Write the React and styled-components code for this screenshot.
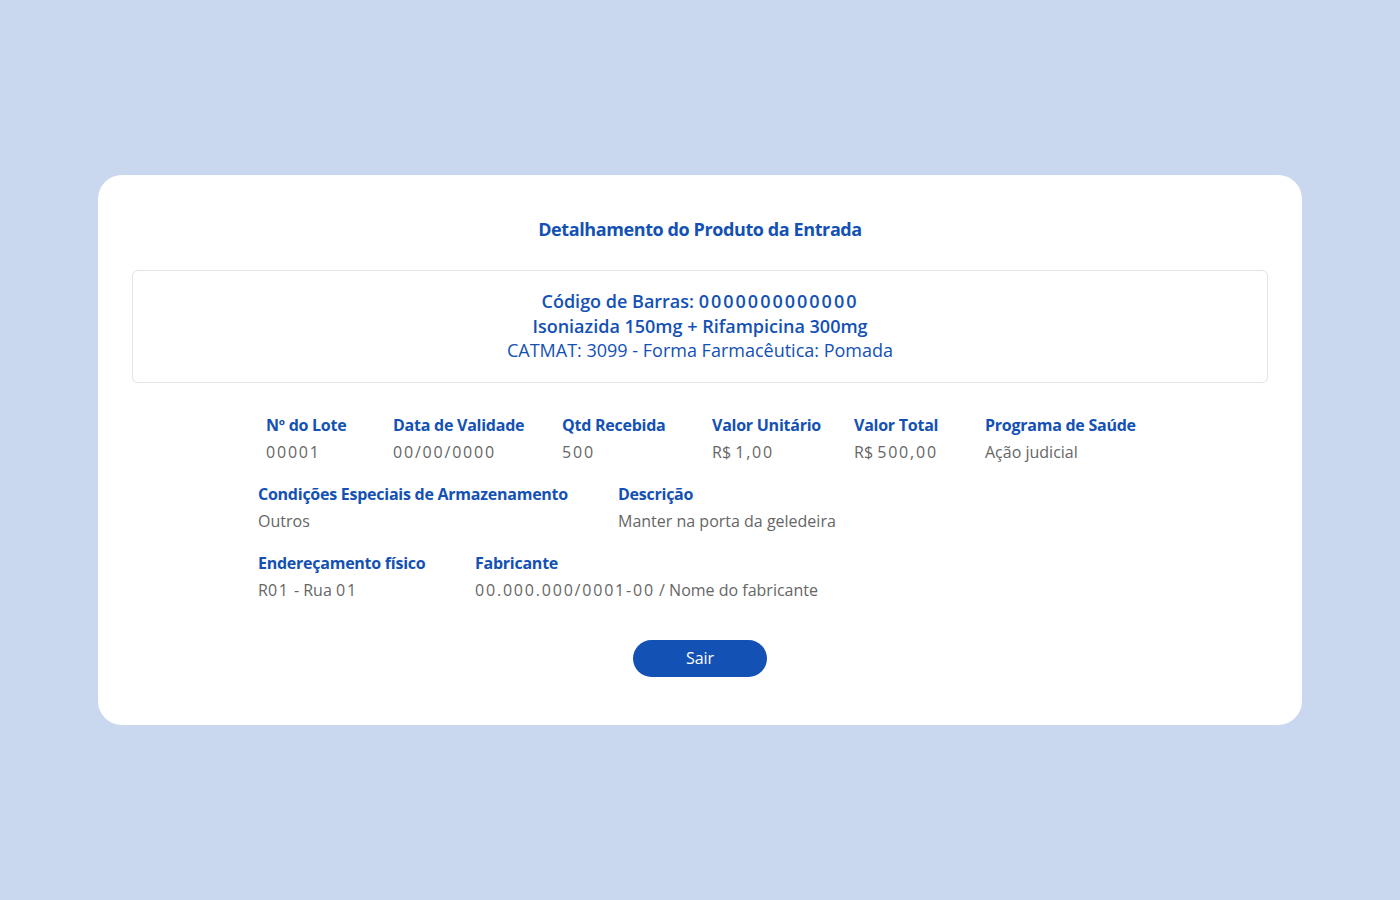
import React from "react";
import styled, { createGlobalStyle } from "styled-components";

const Global = createGlobalStyle`
  html, body { margin: 0; padding: 0; }
  body {
    background: #c9d8ee;
    font-family: "Open Sans", "Noto Sans", sans-serif;
    -webkit-font-smoothing: antialiased;
  }
`;

const Page = styled.div`
  min-height: 900px;
  display: flex;
  align-items: center;
  justify-content: center;
`;

const Card = styled.div`
  width: 1204px;
  box-sizing: border-box;
  background: #fff;
  border-radius: 24px;
  padding: 40px 34px 48px;
  display: flex;
  flex-direction: column;
  align-items: stretch;
`;

const Title = styled.h1`
  margin: 0 0 27px;
  text-align: center;
  font-size: 18px;
  line-height: 28px;
  font-weight: 700;
  letter-spacing: -0.4px;
  color: #1351b4;
`;

const InfoBox = styled.div`
  border: 1px solid #e3e3e3;
  border-radius: 6px;
  padding: 18px 0 19px;
  text-align: center;
  color: #1351b4;
  font-size: 18px;
  line-height: 24.5px;
`;

const InfoLine = styled.div`
  font-weight: ${(p) => (p.$strong ? 600 : 400)};
`;

const Num = styled.span`
  letter-spacing: ${(p) => p.$ls || 1.8}px;
`;

const Fields = styled.div`
  width: 884px;
  margin: 30px auto 0;
  display: flex;
  flex-direction: column;
  gap: 18px;
`;

const Row = styled.div`
  display: grid;
  grid-template-columns: ${(p) => p.$cols};
  padding-left: ${(p) => p.$indent || 0}px;
`;

const Field = styled.div`
  display: flex;
  flex-direction: column;
  gap: 3px;
`;

const Label = styled.div`
  font-size: 16px;
  line-height: 24px;
  font-weight: 700;
  letter-spacing: -0.25px;
  color: #1351b4;
  white-space: nowrap;
`;

const Value = styled.div`
  font-size: 16px;
  line-height: 24px;
  color: #666666;
  white-space: nowrap;
`;

const Actions = styled.div`
  display: flex;
  justify-content: center;
  margin-top: 38px;
`;

const Button = styled.button`
  width: 134px;
  height: 37px;
  border: none;
  border-radius: 19px;
  background: #1351b4;
  color: #fff;
  font-family: inherit;
  font-size: 16px;
  cursor: pointer;
`;

const withNums = (text, ls) =>
  text.split(/(\d[\d./,\-]*\d|\d)/).map((part, i) =>
    i % 2 === 1 ? (
      <Num key={i} $ls={ls}>
        {part}
      </Num>
    ) : (
      part
    )
  );

const rows = [
  {
    indent: 8,
    cols: "127px 169px 150px 142px 131px auto",
    items: [
      ["Nº do Lote", "00001"],
      ["Data de Validade", "00/00/0000"],
      ["Qtd Recebida", "500"],
      ["Valor Unitário", "R$ 1,00"],
      ["Valor Total", "R$ 500,00"],
      ["Programa de Saúde", "Ação judicial"],
    ],
  },
  {
    cols: "360px auto",
    items: [
      ["Condições Especiais de Armazenamento", "Outros"],
      ["Descrição", "Manter na porta da geledeira"],
    ],
  },
  {
    cols: "217px auto",
    items: [
      ["Endereçamento físico", "R01 - Rua 01"],
      ["Fabricante", "00.000.000/0001-00 / Nome do fabricante"],
    ],
  },
];

export default function App() {
  return (
    <>
      <Global />
      <Page>
        <Card>
          <Title>Detalhamento do Produto da Entrada</Title>
          <InfoBox>
            <InfoLine $strong>
              Código de Barras: {withNums("0000000000000", 2)}
            </InfoLine>
            <InfoLine $strong>Isoniazida 150mg + Rifampicina 300mg</InfoLine>
            <InfoLine>CATMAT: 3099 - Forma Farmacêutica: Pomada</InfoLine>
          </InfoBox>
          <Fields>
            {rows.map((r, i) => (
              <Row key={i} $cols={r.cols} $indent={r.indent}>
                {r.items.map(([l, v]) => (
                  <Field key={l}>
                    <Label>{l}</Label>
                    <Value>{withNums(v)}</Value>
                  </Field>
                ))}
              </Row>
            ))}
          </Fields>
          <Actions>
            <Button>Sair</Button>
          </Actions>
        </Card>
      </Page>
    </>
  );
}
